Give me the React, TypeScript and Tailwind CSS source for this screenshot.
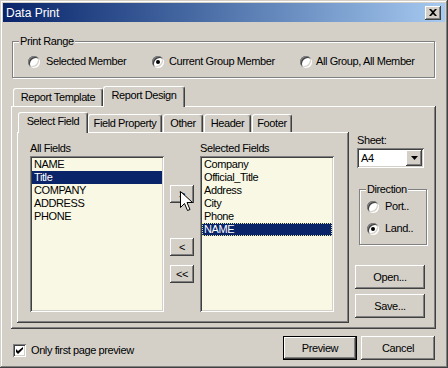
import React from 'react';

const raised =
  'shadow-[inset_-1px_-1px_#404040,inset_1px_1px_#ffffff,inset_-2px_-2px_#808080,inset_2px_2px_#d4d0c8]';
const sunken =
  'shadow-[inset_1px_1px_#808080,inset_-1px_-1px_#ffffff,inset_2px_2px_#404040,inset_-2px_-2px_#d4d0c8]';
const etched = 'border border-[#808080] shadow-[inset_1px_1px_#ffffff,1px_1px_#ffffff]';

const Radio = ({ on }: { on?: boolean }) => (
  <span
    className={`inline-flex w-[12px] h-[12px] shrink-0 rounded-full bg-white items-center justify-center ${sunken}`}
  >
    {on && <span className="w-[4px] h-[4px] rounded-full bg-black" />}
  </span>
);

const Group = ({
  label,
  className,
  children,
}: {
  label: string;
  className: string;
  children: React.ReactNode;
}) => (
  <div className={`relative ${etched} ${className}`}>
    <span className="absolute left-[6px] top-[-7px] px-[1px] leading-[13px] bg-[#d4d0c8]">{label}</span>
    {children}
  </div>
);

const Button = ({ label, className }: { label: string; className: string }) => (
  <div className={`flex items-center justify-center bg-[#d4d0c8] ${raised} ${className}`}>{label}</div>
);

const Tab = ({ label, active, width }: { label: string; active?: boolean; width: string }) => (
  <div
    className={`${width} flex justify-center border-l border-t border-r border-l-white border-t-white border-r-[#404040] rounded-t-[3px] shadow-[inset_-1px_0_#808080] bg-[#d4d0c8] ${
      active ? 'h-[21px] -mb-[1px] pt-[2px] relative z-10' : 'h-[18px] pt-[2px]'
    }`}
  >
    <span className="leading-[13px]">{label}</span>
  </div>
);

const ListBox = ({ items, sel, focus }: { items: string[]; sel: string; focus?: boolean }) => (
  <div className={`w-[134px] h-[156px] bg-[#f8f8e4] p-[2px] ${sunken}`}>
    {items.map((it) => (
      <div
        key={it}
        className={`h-[13px] leading-[13px] pl-[2px] ${
          it === sel ? 'bg-[#0a246a] text-white' : ''
        } ${it === sel && focus ? 'outline outline-1 outline-dotted outline-[#e8e8a0] -outline-offset-1' : ''}`}
      >
        {it}
      </div>
    ))}
  </div>
);

export default function App() {
  return (
    <div className="relative w-[448px] h-[368px] bg-[#d4d0c8] p-[3px] flex flex-col text-[11px] tracking-[-0.4px] text-black font-['Liberation_Sans',Arial,sans-serif] shadow-[inset_-1px_-1px_#404040,inset_1px_1px_#d4d0c8,inset_-2px_-2px_#808080,inset_2px_2px_#ffffff]">
      {/* title bar */}
      <div className="h-[19px] flex items-center justify-between pl-[3px] pr-[4px] bg-gradient-to-r from-[#0a246a] to-[#a6caf0]">
        <span className="text-white text-[12px] tracking-normal leading-[14px]">Data Print</span>
        <div className={`w-[16px] h-[14px] flex items-center justify-center bg-[#d4d0c8] ${raised}`}>
          <svg width="8" height="7" viewBox="0 0 8 7">
            <path d="M0 0h2l2 2 2-2h2L5 3.5 8 7H6L4 5 2 7H0l3-3.5z" fill="#000" />
          </svg>
        </div>
      </div>

      <div className="flex flex-col pl-[8px] pr-[9px]">
        {/* print range */}
        <Group label="Print Range" className="mt-[19px] mx-[1px] h-[37px]">
          <div className="flex items-center pt-[13px] pl-[15px]">
            <div className="w-[124px] flex items-center gap-[6px]">
              <Radio />
              <span className="leading-[13px]">Selected Member</span>
            </div>
            <div className="w-[148px] flex items-center gap-[5px]">
              <Radio on />
              <span className="leading-[13px]">Current Group Member</span>
            </div>
            <div className="flex items-center gap-[4px]">
              <Radio />
              <span className="leading-[13px]">All Group, All Member</span>
            </div>
          </div>
        </Group>

        {/* outer tabs */}
        <div className="mt-[8px] h-[20px] flex items-end pl-[2px] relative z-10">
          <Tab label="Report Template" width="w-[90px]" />
          <Tab label="Report Design" width="w-[82px]" active />
        </div>
        <div className={`h-[223px] flex pl-[6px] pt-[6px] ${raised}`}>
          <div className="w-[332px] flex flex-col">
            <div className="h-[20px] flex items-end pl-[1px] relative z-10">
              <Tab label="Select Field" width="w-[70px]" active />
              <Tab label="Field Property" width="w-[74px]" />
              <div className="w-[1px]" />
              <Tab label="Other" width="w-[40px]" />
              <div className="w-[1px]" />
              <Tab label="Header" width="w-[47px]" />
              <div className="w-[1px]" />
              <Tab label="Footer" width="w-[40px]" />
            </div>
            <div className={`h-[191px] flex pt-[10px] pl-[13px] ${raised}`}>
              <div className="flex flex-col">
                <span className="h-[13px] leading-[13px]">All Fields</span>
                <div className="mt-[1px]">
                  <ListBox items={['NAME', 'Title', 'COMPANY', 'ADDRESS', 'PHONE']} sel="Title" />
                </div>
              </div>
              <div className="ml-[6px] w-[24px] flex flex-col">
                <Button label=">" className="mt-[43px] h-[18px]" />
                <Button label="<" className="mt-[35px] h-[18px]" />
                <Button label="<<" className="mt-[9px] h-[18px]" />
              </div>
              <div className="ml-[6px] flex flex-col">
                <span className="h-[13px] leading-[13px]">Selected Fields</span>
                <div className="mt-[1px]">
                  <ListBox
                    items={['Company', 'Official_Title', 'Address', 'City', 'Phone', 'NAME']}
                    sel="NAME"
                    focus
                  />
                </div>
              </div>
            </div>
          </div>

          {/* right column */}
          <div className="ml-[6px] w-[72px] flex flex-col">
            <span className="mt-[22px] ml-[2px] h-[13px] leading-[13px]">Sheet:</span>
            <div className={`mt-[1px] ml-[2px] w-[67px] h-[20px] bg-white flex items-center p-[2px] ${sunken}`}>
              <span className="flex-1 pl-[2px] leading-[13px]">A4</span>
              <div className={`w-[16px] h-[16px] flex items-center justify-center bg-[#d4d0c8] ${raised}`}>
                <svg width="7" height="4" viewBox="0 0 7 4">
                  <path d="M0 0h7L3.5 4z" fill="#000" />
                </svg>
              </div>
            </div>
            <Group label="Direction" className="mt-[21px] ml-[4px] w-[68px] h-[56px]">
              <div className="flex flex-col pt-[10px] pl-[7px] gap-[9px]">
                <div className="flex items-center gap-[6px] h-[13px]">
                  <Radio />
                  <span className="leading-[13px]">Port..</span>
                </div>
                <div className="flex items-center gap-[6px] h-[13px]">
                  <Radio on />
                  <span className="leading-[13px]">Land..</span>
                </div>
              </div>
            </Group>
            <Button label="Open..." className="mt-[20px] w-[70px] h-[24px]" />
            <Button label="Save..." className="mt-[5px] w-[70px] h-[24px]" />
          </div>
        </div>

        {/* bottom row */}
        <div className="mt-[7px] h-[24px] flex items-start">
          <div className="mt-[8px] ml-[2px] flex items-center gap-[5px]">
            <span className={`w-[13px] h-[13px] bg-white flex items-center justify-center ${sunken}`}>
              <svg width="7" height="7" viewBox="0 0 7 7">
                <path d="M0 2v3l2 2 5-5V-0L2 4z" fill="#000" />
              </svg>
            </span>
            <span className="leading-[13px]">Only first page preview</span>
          </div>
          <div className="ml-auto mr-[1px] flex gap-[4px]">
            <div className="w-[74px] h-[24px] flex items-center justify-center bg-[#d4d0c8] shadow-[inset_0_0_0_1px_#000000,inset_-2px_-2px_#404040,inset_2px_2px_#ffffff,inset_-3px_-3px_#808080]">
              Preview
            </div>
            <Button label="Cancel" className="w-[74px] h-[24px]" />
          </div>
        </div>
      </div>

      {/* mouse pointer */}
      <svg className="absolute left-[180px] top-[191px] z-20" width="13" height="21" viewBox="0 0 13 21">
        <path
          d="M0.5 0.5v16l4-4 3 7 2.5-1-3-7h5.5z"
          fill="#fff"
          stroke="#000"
          strokeWidth="1"
          strokeLinejoin="miter"
        />
      </svg>
    </div>
  );
}
